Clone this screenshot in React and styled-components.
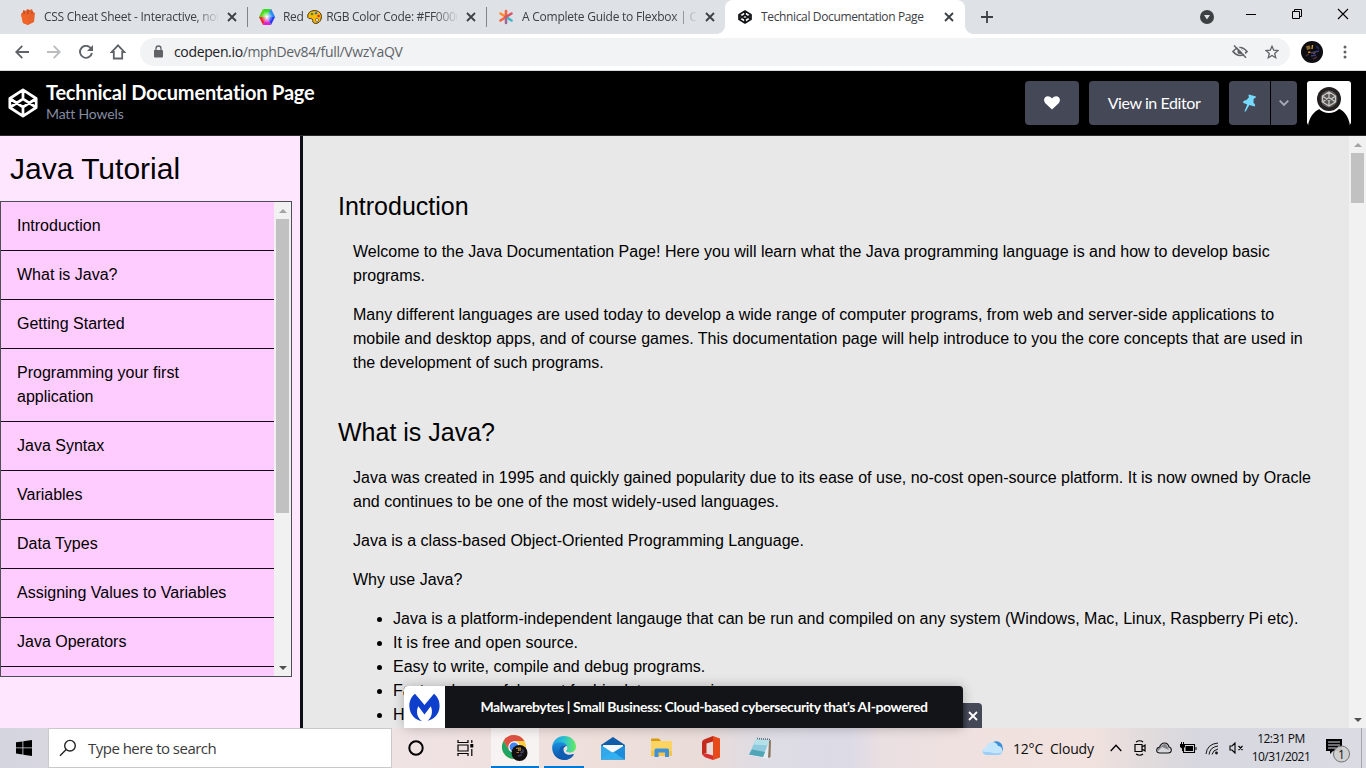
import React from 'react';
import styled, { createGlobalStyle, css } from 'styled-components';

const GlobalStyle = createGlobalStyle`
  * { box-sizing: border-box; }
  html, body { margin: 0; padding: 0; overflow: hidden; }
  svg { display: block; flex: none; }
`;

const uiFont = `"Open Sans", "Noto Sans", sans-serif`;
const penFont = `Lato, "Open Sans", sans-serif`;
const docFont = `"Liberation Sans", Arial, sans-serif`;

const Screen = styled.div`
  width: 1366px;
  height: 768px;
  display: flex;
  flex-direction: column;
  overflow: hidden;
  position: relative;
  background: #000;
`;

/* ---------- browser tabs ---------- */
const TabStrip = styled.div`
  height: 34px;
  flex: none;
  display: flex;
  padding-left: 8px;
  background: #dee1e6;
`;

const Tab = styled.div`
  width: 239px;
  height: 34px;
  display: flex;
  align-items: center;
  padding-left: 12px;
  position: relative;
  font: 12px/16px ${uiFont};
  color: #3c4043;
  ${p => p.$divider && css`
    &::before {
      content: '';
      position: absolute;
      left: 0;
      top: 7px;
      width: 1px;
      height: 20px;
      background: #808387;
    }
  `}
  ${p => p.$active && css`
    width: 240px;
    background: #fff;
    border-radius: 8px 8px 0 0;
    &::before, &::after {
      content: '';
      position: absolute;
      bottom: 0;
      width: 8px;
      height: 8px;
    }
    &::before { left: -8px; background: radial-gradient(circle at 0 0, #dee1e6 7.5px, #fff 8px); }
    &::after { right: -8px; background: radial-gradient(circle at 100% 0, #dee1e6 7.5px, #fff 8px); }
  `}
`;

const TabTitle = styled.div`
  width: 174px;
  margin-left: 8px;
  display: flex;
  align-items: center;
  white-space: nowrap;
  overflow: hidden;
  letter-spacing: ${p => p.$track || '-0.24px'};
  ${p => p.$fade && css`mask-image: linear-gradient(90deg, #000 150px, transparent 176px);`}
`;

const Emoji = styled.span`
  margin: 0 1px;
`;

const TabClose = styled.div`
  width: 28px;
  display: flex;
  justify-content: center;
`;

const NewTab = styled.div`
  width: 44px;
  display: flex;
  align-items: center;
  justify-content: center;
`;

const WindowControls = styled.div`
  margin-left: auto;
  display: flex;
  align-items: flex-start;
`;

const ControlCell = styled.div`
  width: ${p => p.$w || 46}px;
  height: ${p => p.$h || 28}px;
  display: flex;
  align-items: center;
  justify-content: center;
`;

/* ---------- address bar ---------- */
const Toolbar = styled.div`
  height: 37px;
  flex: none;
  display: flex;
  align-items: center;
  background: #fff;
  border-bottom: 1px solid #d5d7da;
  padding-left: 6px;
`;

const ToolButton = styled.div`
  width: 32px;
  display: flex;
  justify-content: center;
`;

const Omnibox = styled.div`
  width: 1150px;
  height: 28px;
  margin-left: 6px;
  padding: 0 2px 0 12px;
  border-radius: 14px;
  background: #f1f3f4;
  display: flex;
  align-items: center;
`;

const Url = styled.div`
  margin-left: 10px;
  flex: 1;
  font: 14px/20px ${uiFont};
  letter-spacing: -0.35px;
  color: #5f6368;
`;

const Host = styled.span`
  color: #202124;
`;

/* ---------- pen header ---------- */
const PenHeader = styled.header`
  height: 65px;
  flex: none;
  display: flex;
  align-items: flex-start;
  padding: 10px 15px 0 8px;
  background: #000;
  border-bottom: 1px solid #2a2a2e;
  font-family: ${penFont};
`;

const PenLogo = styled.div`
  padding-top: 7px;
`;

const PenTitles = styled.div`
  margin-left: 8px;
  flex: 1;
`;

const PenTitle = styled.h1`
  margin: 0;
  font-size: 20px;
  line-height: 22px;
  font-weight: 700;
  letter-spacing: -0.2px;
  color: #fff;
`;

const PenAuthor = styled.div`
  padding-top: 2px;
  font-size: 14px;
  line-height: 18px;
  letter-spacing: -0.15px;
  color: #868ca0;
`;

const PenButton = styled.div`
  width: ${p => p.$w}px;
  height: 44px;
  margin-left: ${p => p.$gap ?? 10}px;
  border-radius: ${p => p.$radius || '4px'};
  display: flex;
  align-items: center;
  justify-content: center;
  background: #444857;
  color: #fff;
  font-size: 16px;
  letter-spacing: -0.42px;
  padding-bottom: ${p => p.$lift || 0}px;
`;

const PenAvatar = styled.div`
  width: 44px;
  height: 44px;
  margin-left: 10px;
  border-radius: 3px;
  overflow: hidden;
  background: #fff;
`;

/* ---------- document ---------- */
const Page = styled.div`
  height: 592px;
  flex: none;
  display: flex;
  font: 16px/24px ${docFont};
  color: #000;
`;

const Sidebar = styled.aside`
  width: 303px;
  background: #fee6ff;
  border-right: 3px solid #0c0f13;
`;

const SidebarTitle = styled.h1`
  margin: 0;
  height: 65px;
  padding-left: 10px;
  font-size: 30px;
  line-height: 65px;
  font-weight: 400;
`;

const Nav = styled.nav`
  width: 292px;
  height: 476px;
  border: 1px solid #4d4e53;
  display: flex;
  overflow: hidden;
`;

const NavList = styled.div`
  flex: 1;
  background: #ffccff;
`;

const NavItem = styled.div`
  padding: 12px 80px 12px 16px;
  border-bottom: 1px solid #170817;
  ${p => p.$wide && css`padding-right: 0;`}
`;

const ScrollTrack = styled.div`
  width: 17px;
  flex: none;
  display: flex;
  flex-direction: column;
  align-items: center;
  justify-content: space-between;
  background: #f1f1f1;
`;

const ScrollThumb = styled.div`
  width: 13px;
  height: ${p => p.$h}px;
  background: #c1c1c1;
  margin-bottom: auto;
`;

const ScrollArrow = styled.div`
  height: 17px;
  display: flex;
  align-items: center;
`;

const Main = styled.main`
  flex: 1;
  background: #e8e8e8;
  padding: 52px 30px 0 35px;
  overflow: hidden;
`;

const Section = styled.section`
  margin-bottom: 39px;
`;

const Heading = styled.h2`
  margin: 0;
  height: 52px;
  font-size: 25px;
  line-height: 36px;
  font-weight: 400;
`;

const Para = styled.p`
  margin: 0 0 15px 15px;
`;

const Bullets = styled.ul`
  margin: 0 0 0 15px;
  padding-left: 40px;
`;

/* ---------- sponsor strip, floating over the page ---------- */
const Sponsor = styled.div`
  position: absolute;
  left: 404px;
  top: 686px;
  height: 42px;
  display: flex;
  align-items: flex-end;
`;

const SponsorCard = styled.div`
  width: 559px;
  height: 42px;
  display: flex;
  overflow: hidden;
  border-radius: 4px 4px 0 0;
  background: #131417;
  box-shadow: 0 0 12px rgba(0, 0, 0, 0.25);
`;

const SponsorLogo = styled.div`
  width: 41px;
  display: flex;
  align-items: center;
  justify-content: center;
  background: #fff;
`;

const SponsorText = styled.div`
  flex: 1;
  text-align: center;
  font: 700 14px/42px ${penFont};
  letter-spacing: -0.41px;
  color: #fff;
  white-space: nowrap;
`;

const SponsorClose = styled.div`
  width: 19px;
  height: 25px;
  border-radius: 0 4px 0 0;
  background: linear-gradient(90deg, #2c2e39, #444857 5px);
  display: flex;
  align-items: center;
  justify-content: center;
`;

/* ---------- taskbar ---------- */
const Taskbar = styled.div`
  height: 40px;
  flex: none;
  display: flex;
  background: linear-gradient(90deg, #d5d5df 0, #d8d7e0 48px, #f0e3e4 391px, #eedfdb 600px, #e9dcd9 700px, #dedce4 765px, #dcdbe6 850px, #eadfe2 880px, #efe1df 960px, #f1e2df 1090px, #e3dcdc 1140px, #d6d7df 1200px, #dadbe3 1366px);
  font-family: ${uiFont};
  color: #0c0c0c;
`;

const StartButton = styled.div`
  width: 48px;
  display: flex;
  align-items: center;
  justify-content: center;
`;

const SearchBox = styled.div`
  width: 344px;
  border: 1px solid #c9c9c9;
  background: #fff;
  display: flex;
  align-items: center;
  padding-left: 10px;
  font-size: 15px;
  letter-spacing: -0.52px;
  color: #3a3a3a;
`;

const SearchLabel = styled.span`
  margin-left: 11px;
`;

const TaskIcon = styled.div`
  width: ${p => p.$w || 49}px;
  display: flex;
  align-items: center;
  justify-content: center;
  position: relative;
  ${p => p.$focused && css`background: #f8f3f3;`}
  ${p => p.$running && css`
    &::after {
      content: '';
      position: absolute;
      bottom: 0;
      left: ${p.$focused ? 0 : 5}px;
      right: ${p.$focused ? 0 : 4}px;
      height: 2px;
      background: #0078d7;
    }
  `}
`;

const Tray = styled.div`
  margin-left: auto;
  display: flex;
  align-items: center;
`;

const Weather = styled.div`
  display: flex;
  align-items: center;
  font-size: 14px;
  letter-spacing: -0.2px;
  width: 122px;
`;

const Temp = styled.span`
  margin-left: 9px;
  width: 37px;
`;

const TrayIcon = styled.div`
  width: 24px;
  display: flex;
  justify-content: center;
`;

const Clock = styled.div`
  width: 66px;
  text-align: center;
  font-size: 12px;
  line-height: 18px;
  letter-spacing: -0.5px;
`;

const Notice = styled.div`
  width: 40px;
  display: flex;
  justify-content: flex-end;
  padding: 4px 3px 0 0;
`;

const DesktopEdge = styled.div`
  width: 5px;
  height: 40px;
  margin-left: 7px;
  border-left: 1px solid #a6a6ac;
`;

/* ---------- drawings ---------- */
const Cross = ({ size = 8, color = '#3c4043', stroke = 1.8 }) => (
  <svg width={size} height={size} viewBox="0 0 8 8" overflow="visible">
    <path d="M0 0L8 8M8 0L0 8" stroke={color} strokeWidth={stroke * 8 / size} />
  </svg>
);

const CodePenMark = ({ size, color, width }) => (
  <svg width={size} height={size} viewBox="0 0 100 100" fill="none" stroke={color} strokeWidth={width} strokeLinejoin="round">
    <path d="M50 6L94 35V65L50 94L6 65V35ZM6 35L50 64L94 35M6 65L50 36L94 65M50 6V36M50 64V94" />
  </svg>
);

const CodePenFavicon = () => (
  <svg width="16" height="16" viewBox="0 0 16 16" fill="none" stroke="#131417" strokeWidth="1.700" strokeLinejoin="round">
    <path d="M8 2L14 5.800V10.200L8 14L2 10.200V5.800ZM8 6L11 8L8 10L5 8ZM8 2V6M8 10V14M2 5.800L5 8L2 10.200M14 5.800L11 8L14 10.200" />
  </svg>
);

const Arrow = ({ down, color }) => (
  <svg width="8" height="4" viewBox="0 0 8 4"><path d={down ? 'M0 0H8L4 4Z' : 'M0 4H8L4 0Z'} fill={color} /></svg>
);

const Basket = () => (
  <svg width="16" height="16" viewBox="0 0 16 16">
    <path d="M1 5L3 3L3 1L6 2L7 0L10 1L12 0L13 3L15 4L14 13L8 16L3 14Z" fill="#e8622c" />
    <path d="M1 5L8 6L8 16L3 14Z" fill="#f16529" />
    <path d="M4 2V5M8 1V5M12 2V5" stroke="#b7421a" />
  </svg>
);

const ColorHex = () => (
  <svg width="16" height="16" viewBox="0 0 16 16">
    <defs><radialGradient id="core"><stop offset="0" stopColor="#fff" /><stop offset="1" stopColor="#fff" stopOpacity="0" /></radialGradient></defs>
    <path d="M8 8L4 0H12Z" fill="#30e020" />
    <path d="M8 8L12 0L16 8Z" fill="#9a50f0" />
    <path d="M8 8H16L12 16Z" fill="#2838f0" />
    <path d="M8 8L12 16H4Z" fill="#18c8e8" />
    <path d="M8 8L4 16L0 8Z" fill="#f02030" />
    <path d="M8 8H0L4 0Z" fill="#50d810" />
    <path d="M8 8L12 0L16 8Z" fill="#2090f0" />
    <path d="M8 8L12 16H4Z" fill="#e020d0" />
    <circle cx="8" cy="8" r="6" fill="url(#core)" />
  </svg>
);

const Palette = () => (
  <svg width="15" height="14" viewBox="0 0 15 14">
    <path d="M7.5 .6C3 .6 .7 3.5 .7 6.3c0 2 1.600 2.400 3 2.300 1.500 0 2 .8 2 2 0 1.700 1 2.800 3 2.800 3.300 0 5.700-3 5.700-6.800C14.400 3 11.500 .6 7.500 .6Z" fill="#fcb900" stroke="#3a2a10" />
    <circle cx="5" cy="4" r="1.300" fill="#3a8a28" /><circle cx="9" cy="3.200" r="1.200" fill="#2a70c8" />
    <circle cx="11.600" cy="6" r="1.200" fill="#d02828" /><circle cx="10" cy="10" r="1.500" fill="#fff" stroke="#3a2a10" strokeWidth=".6" />
  </svg>
);

const Asterisk = () => (
  <svg width="16" height="16" viewBox="0 0 16 16" strokeWidth="2.600" strokeLinecap="round">
    <path d="M8 8L2.500 4.500" stroke="#ff8a2b" /><path d="M8 8V2" stroke="#f2643c" />
    <path d="M8 8L13.500 4.500" stroke="#d8526a" /><path d="M8 8L2.500 11.500" stroke="#f4653f" />
    <path d="M8 8V14" stroke="#9d6a9c" /><path d="M8 8L13.500 11.500" stroke="#3fb6c4" />
    <circle cx="8" cy="8" r="1.500" fill="#e84a58" />
  </svg>
);

const Heart = () => (
  <svg width="16" height="14" viewBox="0 0 16 14">
    <path d="M8 13.500L1.300 7.200C-.4 5.400-.3 2.700 1.200 1.300 3-.4 6 0 8 2.500 10-.0 13-.4 14.800 1.300c1.500 1.400 1.600 4.100-.1 5.900Z" fill="#fff" />
  </svg>
);

const Pin = () => (
  <svg width="16" height="18" viewBox="0 0 16 18">
    <path d="M7 .5L14 2.600 13.200 4.300 11.700 4.500 11.400 8.500 13.200 10.800 12.700 12.500 7.400 11 3.500 17.700 2.500 17.300 5.200 10.400 1 8.700 1.500 7 4.700 5.800 7.200 3 6.300 2Z" fill="#76daff" />
  </svg>
);

const PenPortrait = () => (
  <svg width="44" height="44" viewBox="0 0 44 44">
    <path d="M1 44C3 34 9 28 16 27H29C36 28 41 34 43 44Z" fill="#000" />
    <circle cx="22" cy="18" r="14" fill="#fff" />
    <circle cx="22" cy="18" r="12" fill="#231f20" />
    <circle cx="22" cy="18" r="8.500" fill="#55524f" />
    <path d="M22 11L28.500 15V21L22 25L15.500 21V15ZM15.500 15L22 19.500L28.500 15M15.500 21L22 16.500L28.500 21M22 11V16.500M22 19.500V25" fill="none" stroke="#c8c8c8" strokeWidth="1.300" />
  </svg>
);

const MalwareMark = () => (
  <svg width="31" height="29" viewBox="0 0 31 29">
    <path d="M6 .8C1 5 0 10 .5 14.500 1 21.500 6 27 13 28.300 10 26 8 22.500 8 19.500 8 17 8.500 15 9.300 13.300L15.500 21.500 21.700 13.300C23 16 23.300 19 22.600 21.500 22 24 20.500 26 18.500 27.800 25.500 26 30 21 30.500 14.500 31 9.500 29.500 4.500 25 .8L15.500 12Z" fill="#0d3ecc" />
  </svg>
);

const ChromeMark = () => (
  <svg width="26" height="26" viewBox="0 0 26 26" overflow="visible">
    <circle cx="12" cy="12" r="12" fill="#ffcd40" />
    <path d="M1.600 6A12 12 0 0 1 22.400 6H12L7 15Z" fill="#dd5144" />
    <path d="M1.600 6A12 12 0 0 0 12 24L16.800 15.500 7.200 15.500Z" fill="#1fa463" />
    <circle cx="12" cy="12" r="5.700" fill="#fff" /><circle cx="12" cy="12" r="4.500" fill="#4285f4" />
    <circle cx="17.500" cy="18" r="8" fill="#12100f" />
    <path d="M14 13.500L17 13L16.500 16M18.500 12.500L18 16" stroke="#b88a30" strokeWidth="1.200" fill="none" />
    <path d="M14.500 17.500L17 17.500M19 18L21 17" stroke="#b87020" strokeWidth="1.200" />
    <path d="M20 14L22 16M16 21L20 20M18 17.500L22 16.500" stroke="#34386a" strokeWidth="1.300" />
  </svg>
);

const EdgeMark = () => (
  <svg width="24" height="24" viewBox="0 0 24 24">
    <defs>
      <linearGradient id="edgeTop"><stop offset="0" stopColor="#1b9de2" /><stop offset=".5" stopColor="#2bc3d2" /><stop offset="1" stopColor="#66eb5c" /></linearGradient>
      <linearGradient id="edgeLow" x1="0" y1="0" x2="0" y2="1"><stop offset="0" stopColor="#1b8fe0" /><stop offset="1" stopColor="#0c50a4" /></linearGradient>
    </defs>
    <path d="M.2 10.500C1 4.500 6 0 12 0 19 0 24 5 24 10.500c0 4-3 6-6.300 6-2.500 0-4-.8-3.500-1.700C17 12 14.500 7.500 9.500 7.500 5 7.500 1.300 9.500.2 10.500Z" fill="url(#edgeTop)" />
    <path d="M.2 10.500C2 7.500 5.500 6 9 6.300c3 .2 5 1.700 6 3.400C12 8 8.500 10.500 8.500 14.500 8.500 19 13 21.500 17 20.800c2-.3 3.500-1 4.800-2.200C20 22 16 24 12 24 5 24-.5 18 .2 10.500Z" fill="url(#edgeLow)" />
    <path d="M15 9.700C11 8 7 11 7.200 15.500 7.300 20 10 23 13.500 24 17 23.700 20 21.800 21.800 18.600c.3-.6-.2-.9-.7-.6-4 2-9.600.3-9.600-4.500 0-1.800 1.200-3 3.500-3.800Z" fill="#0f5eb4" />
  </svg>
);

const MailMark = () => (
  <svg width="24" height="23" viewBox="0 0 24 23">
    <path d="M0 8L12 0L24 8V22.500H0Z" fill="#0f5ca8" />
    <path d="M2 8H22V18H2Z" fill="#f5f7fa" />
    <path d="M0 8L12 16 0 22.500Z" fill="#32a8ea" /><path d="M24 8L12 15.500 24 22.500Z" fill="#1d8ddb" />
    <path d="M0 22.500V21.500L12 15L24 22.500Z" fill="#2fb0f0" />
  </svg>
);

const FolderMark = () => (
  <svg width="22" height="20" viewBox="0 0 22 20">
    <path d="M0 1.500Q0 .5 1 .5H8L10 3H0Z" fill="#d99a0e" />
    <path d="M0 3H21V18H0Z" fill="#fcd462" /><path d="M0 13H21V18H0Z" fill="#f7c648" />
    <path d="M3.500 19V12Q3.500 10.500 5 10.500H16.500Q18 10.500 18 12V19H14V14.500H7.500V19Z" fill="#3f92d8" />
  </svg>
);

const OfficeMark = () => (
  <svg width="20" height="24" viewBox="0 0 20 24">
    <path d="M12 0L19 2.500V21.500L12 24Z" fill="#e64a19" />
    <path d="M12 0L3 3.500Q1 4.300 1 6.500V18.500L5.500 17V7.500L12 5.500Z" fill="#c42b1c" />
    <path d="M1 18.500L5 17.500 12 19.500V24L4 21.200Z" fill="#d83030" />
  </svg>
);

const NotepadMark = () => (
  <svg width="24" height="23" viewBox="0 0 24 23">
    <path d="M19 4L23 3L22.500 20L19 21.500Z" fill="#8a7660" />
    <path d="M8 3L21 3.500L20 22L1 18Z" fill="#e6ecee" />
    <path d="M8 2L21.500 3L15 20L1 17.500Z" fill="#8fcbdc" />
    <path d="M8 2L21.500 3L19.500 8.500L5.500 7.500Z" fill="#b4e0ea" />
    <path d="M1 17.500L15 20L17 15L4 12.500Z" fill="#4fa4b6" />
    <path d="M9 1.500L22 2.500" stroke="#5c6266" strokeWidth="1.500" strokeDasharray="1 1" />
  </svg>
);

const WeatherCloud = () => (
  <svg width="22" height="16" viewBox="0 0 22 16">
    <path d="M9 5C10 2 13 .5 16 1.500c3 1 4.500 3 4.500 5.500 1.500 3-.5 6.500-4 6.500Z" fill="#3a8fd8" />
    <path d="M5 15C2 15 .5 13.200 .5 11 .5 9 2 7.500 4.500 7.300 5 4.500 7 2 10 2c3 0 5 1.500 6 4 2.700 0 4.500 2.300 4.500 4.800S18.500 15 15.500 15Z" fill="#c4e6fc" />
    <path d="M5 15C2 15 .5 13.200 .5 11 3 13 7 11 9 12.500 12 14 17 13 20 12.500 19 14.300 17.500 15 15.500 15Z" fill="#9bd0f6" />
  </svg>
);

const navItems = [
  'Introduction', 'What is Java?', 'Getting Started', 'Programming your first application', 'Java Syntax',
  'Variables', 'Data Types', 'Assigning Values to Variables', 'Java Operators',
];

const bulletItems = [
  'Java is a platform-independent langauge that can be run and compiled on any system (Windows, Mac, Linux, Raspberry Pi etc).',
  'It is free and open source.',
  'Easy to write, compile and debug programs.',
  'Fast and powerful, great for big data processing.',
  'H',
];

function BrowserTabs() {
  return (
    <TabStrip>
      <Tab><Basket /><TabTitle $fade $track="-0.27px">CSS Cheat Sheet - Interactive, not</TabTitle><TabClose><Cross /></TabClose></Tab>
      <Tab $divider><ColorHex /><TabTitle $fade $track="-0.3px">Red&nbsp;<Emoji><Palette /></Emoji>&nbsp;RGB Color Code: #FF0000</TabTitle><TabClose><Cross /></TabClose></Tab>
      <Tab $divider><Asterisk /><TabTitle $fade>A Complete Guide to Flexbox | CSS</TabTitle><TabClose><Cross /></TabClose></Tab>
      <Tab $active><CodePenFavicon /><TabTitle $track="-0.36px">Technical Documentation Page</TabTitle><TabClose><Cross /></TabClose></Tab>
      <NewTab><svg width="12" height="12" viewBox="0 0 12 12"><path d="M6 0V12M0 6H12" stroke="#3c4043" strokeWidth="1.800" /></svg></NewTab>
      <WindowControls>
        <ControlCell $w={42} $h={34}>
          <svg width="14" height="14" viewBox="0 0 14 14"><circle cx="7" cy="7" r="7" fill="#3c4043" /><path d="M4 5H10L7 9.500Z" fill="#dee1e6" /></svg>
        </ControlCell>
        <ControlCell><svg width="10" height="10" viewBox="0 0 10 10"><path d="M0 5.500H10" stroke="#000" /></svg></ControlCell>
        <ControlCell>
          <svg width="10" height="10" viewBox="0 0 10 10" fill="none" stroke="#000"><path d="M.5 2.500H7.500V9.500H.5ZM2.500 2.500V.5H9.500V7.500H7.500" /></svg>
        </ControlCell>
        <ControlCell><Cross size={10} color="#000" stroke={1.1} /></ControlCell>
      </WindowControls>
    </TabStrip>
  );
}

function AddressBar() {
  return (
    <Toolbar>
      <ToolButton><svg width="14" height="14" viewBox="0 0 14 14" fill="none" stroke="#5f6368" strokeWidth="1.800"><path d="M14 7H1.500M7.300 .8L1.200 7L7.300 13.200" /></svg></ToolButton>
      <ToolButton><svg width="14" height="14" viewBox="0 0 14 14" fill="none" stroke="#babcbe" strokeWidth="1.800"><path d="M0 7H12.500M6.700 .8L12.800 7L6.700 13.200" /></svg></ToolButton>
      <ToolButton>
        <svg width="14" height="14" viewBox="0 0 14 14"><path d="M11.800 3.200A6 6 0 1 0 12.900 8" fill="none" stroke="#5f6368" strokeWidth="1.900" /><path d="M14 0V6H8Z" fill="#5f6368" /></svg>
      </ToolButton>
      <ToolButton>
        <svg width="16" height="16" viewBox="0 0 16 16"><path d="M8 1.300L1.800 8H3.800V14.500H12.200V8H14.200Z" fill="none" stroke="#5f6368" strokeWidth="1.800" /></svg>
      </ToolButton>
      <Omnibox>
        <svg width="12" height="14" viewBox="0 0 12 14"><path d="M2 5H10Q11 5 11 6V11.500Q11 12.500 10 12.500H3Q2 12.500 2 11.500Z" fill="#5f6368" /><path d="M4 6V3.500a2.500 2.500 0 0 1 5 0V6" fill="none" stroke="#5f6368" strokeWidth="1.300" /></svg>
        <Url><Host>codepen.io</Host>/mphDev84/full/VwzYaQV</Url>
        <ToolButton>
          <svg width="16" height="14" viewBox="0 0 16 14"><path d="M1 6.500Q8-1.500 15 6.500Q8 14.500 1 6.500Z" fill="none" stroke="#5f6368" strokeWidth="1.700" /><circle cx="8" cy="6.500" r="2.600" fill="#5f6368" /><path d="M3.500 -.3L15 11.200" stroke="#f1f3f4" strokeWidth="1.500" /><path d="M2 .5L14 12.800" stroke="#5f6368" strokeWidth="1.500" /></svg>
        </ToolButton>
        <ToolButton>
          <svg width="14" height="14" viewBox="0 0 14 14"><path d="M7 1.300L8.700 5.200L13 5.600L9.700 8.400L10.700 12.700L7 10.400L3.300 12.700L4.300 8.400L1 5.600L5.300 5.200Z" fill="none" stroke="#5f6368" strokeWidth="1.300" /></svg>
        </ToolButton>
      </Omnibox>
      <ControlCell $w={44}>
        <svg width="22" height="22" viewBox="0 0 22 22">
          <circle cx="11" cy="11" r="11" fill="#0e0d12" />
          <path d="M5 5L9 4.500L9.500 8L6 9Z" fill="#8a6a2c" /><path d="M11.500 4L11 8" stroke="#c99a2e" strokeWidth="1.400" fill="none" /><path d="M7 11.500L9.500 11M12.500 12.500L14 11" stroke="#e08a20" strokeWidth="1.500" />
          <path d="M10 12L18 10M10 15L15 14" stroke="#3a3f78" strokeWidth="1.600" /><path d="M15 5L18 8" stroke="#23264e" strokeWidth="2" /><path d="M5 15L8 13M12 18L16 16" stroke="#4c2a34" strokeWidth="1.500" />
        </svg>
      </ControlCell>
      <ControlCell $w={22}><svg width="4" height="14" viewBox="0 0 4 14" fill="#5f6368"><circle cx="2" cy="2" r="1.500" /><circle cx="2" cy="7" r="1.500" /><circle cx="2" cy="12" r="1.500" /></svg></ControlCell>
    </Toolbar>
  );
}

function PenBar() {
  return (
    <PenHeader>
      <PenLogo><CodePenMark size={30} color="#fff" width={9} /></PenLogo>
      <PenTitles><PenTitle>Technical Documentation Page</PenTitle><PenAuthor>Matt Howels</PenAuthor></PenTitles>
      <PenButton $w={54}><Heart /></PenButton>
      <PenButton $w={130} $lift={1}>View in Editor</PenButton>
      <PenButton $w={41} $radius="4px 0 0 4px"><Pin /></PenButton>
      <PenButton $w={26} $gap={1} $radius="0 4px 4px 0">
        <svg width="10" height="6" viewBox="0 0 10 6"><path d="M.7 .7L5 5L9.300 .7" fill="none" stroke="#a9adbb" strokeWidth="1.800" /></svg>
      </PenButton>
      <PenAvatar><PenPortrait /></PenAvatar>
    </PenHeader>
  );
}

function Scrollbar({ thumb }) {
  return (
    <ScrollTrack>
      <ScrollArrow><Arrow color="#a3a3a3" /></ScrollArrow>
      <ScrollThumb $h={thumb} />
      <ScrollArrow><Arrow down color="#505050" /></ScrollArrow>
    </ScrollTrack>
  );
}

function Documentation() {
  return (
    <Page>
      <Sidebar>
        <SidebarTitle>Java Tutorial</SidebarTitle>
        <Nav>
          <NavList>{navItems.map(t => <NavItem key={t} $wide={t.startsWith('Assigning')}>{t}</NavItem>)}</NavList>
          <Scrollbar thumb={294} />
        </Nav>
      </Sidebar>
      <Main>
        <Section>
          <Heading>Introduction</Heading>
          <Para>Welcome to the Java Documentation Page! Here you will learn what the Java programming language is and how to develop basic programs.</Para>
          <Para>Many different languages are used today to develop a wide range of computer programs, from web and server-side applications to mobile and desktop apps, and of course games. This documentation page will help introduce to you the core concepts that are used in the development of such programs.</Para>
        </Section>
        <Section>
          <Heading>What is Java?</Heading>
          <Para>Java was created in 1995 and quickly gained popularity due to its ease of use, no-cost open-source platform. It is now owned by Oracle and continues to be one of the most widely-used languages.</Para>
          <Para>Java is a class-based Object-Oriented Programming Language.</Para>
          <Para>Why use Java?</Para>
          <Bullets>{bulletItems.map(t => <li key={t}>{t}</li>)}</Bullets>
        </Section>
      </Main>
      <Scrollbar thumb={50} />
    </Page>
  );
}

function WindowsBar() {
  return (
    <Taskbar>
      <StartButton>
        <svg width="16" height="16" viewBox="0 0 16 16"><path d="M0 2.300L6.500 1.400V7.500H0ZM7.300 1.300L16 0V7.500H7.300ZM0 8.300H6.500V14.500L0 13.600ZM7.300 8.300H16V16L7.300 14.700Z" /></svg>
      </StartButton>
      <SearchBox>
        <svg width="18" height="18" viewBox="0 0 18 18" fill="none" stroke="#222" strokeWidth="1.400"><circle cx="11" cy="6.700" r="5.300" /><path d="M7.200 10.500L1 16.700" /></svg>
        <SearchLabel>Type here to search</SearchLabel>
      </SearchBox>
      <TaskIcon $w={48}><svg width="16" height="16" viewBox="0 0 16 16"><circle cx="8" cy="8" r="6.700" fill="none" stroke="#000" strokeWidth="2" /></svg></TaskIcon>
      <TaskIcon $w={51}>
        <svg width="17" height="16" viewBox="0 0 17 16" fill="none" stroke="#000" strokeWidth="1.200"><path d="M1 0V2.500H11V0M1 16V13.500H11V16M1 5H11V11H1ZM14.800 0V3M14.800 9V16" /><path d="M13.300 4H16.300V7.500H13.300Z" fill="#000" stroke="none" /></svg>
      </TaskIcon>
      <TaskIcon $w={48} $running $focused><ChromeMark /></TaskIcon>
      <TaskIcon $running><EdgeMark /></TaskIcon>
      <TaskIcon><MailMark /></TaskIcon>
      <TaskIcon><FolderMark /></TaskIcon>
      <TaskIcon><OfficeMark /></TaskIcon>
      <TaskIcon><NotepadMark /></TaskIcon>
      <Tray>
        <Weather><WeatherCloud /><Temp>12°C</Temp><span>Cloudy</span></Weather>
        <TrayIcon><svg width="12" height="8" viewBox="0 0 12 8"><path d="M.7 7L6 1.300L11.300 7" fill="none" stroke="#000" strokeWidth="1.300" /></svg></TrayIcon>
        <TrayIcon><svg width="12" height="16" viewBox="0 0 12 16" fill="none" stroke="#000" strokeWidth="1.200"><path d="M2 2Q6-.5 9 2M2 14Q6 16.500 9 14M1 4.500H8V11.500H1ZM8 7L11 5V11L8 9" /></svg></TrayIcon>
        <TrayIcon><svg width="16" height="12" viewBox="0 0 16 12"><path d="M4 11Q.7 11 .7 8.200Q.7 5.500 3.500 5.200Q5 1 8.500 1Q12 1 13 5Q15.300 5.500 15.300 8Q15.300 11 12 11Z" fill="#d8d8dc" stroke="#111" strokeWidth="1.100" /><path d="M2 9L6 5L13 8L11 3.500Q8 0 4.500 5L1.500 7Z" fill="#84858a" /></svg></TrayIcon>
        <TrayIcon><svg width="17" height="12" viewBox="0 0 17 12"><path d="M5 2.500H14.500V10.500H3.500V6" fill="none" stroke="#000" strokeWidth="1.100" /><path d="M5.500 4H13V9H5.500ZM15.500 5H16.500V8H15.500ZM0 2H5V5L3.500 6.500V9H2V6.500L0 5ZM1 0H2V2H1ZM3 0H4V2H3Z" /></svg></TrayIcon>
        <TrayIcon><svg width="14" height="13" viewBox="0 0 14 13" fill="none" stroke="#111" strokeWidth="1"><path d="M1 12Q2 2 13 1M4 12.500Q5 5 13 4M7 12.500Q8 8 13 7" /><circle cx="11.500" cy="11" r="1.400" fill="#111" stroke="none" /></svg></TrayIcon>
        <TrayIcon><svg width="15" height="12" viewBox="0 0 15 12" fill="none" stroke="#000" strokeWidth="1.100"><path d="M1 4H3L6 1V11L3 8H1ZM9.500 4L13.500 8M13.500 4L9.500 8" /></svg></TrayIcon>
        <Clock>12:31 PM<br />10/31/2021</Clock>
        <Notice>
          <svg width="26" height="26" viewBox="0 0 26 26"><path d="M1 2H17V14H8L5 17V14H1Z" fill="#000" /><path d="M3 5H15M3 8H15M3 11H11" stroke="#dcdde4" strokeWidth="1" /><circle cx="16.500" cy="17" r="8" fill="#cfcfcf" fillOpacity=".92" stroke="#707070" /><text x="16.500" y="21.500" textAnchor="middle" fontSize="12" fontFamily="Open Sans, sans-serif" fill="#111">1</text></svg>
        </Notice>
        <DesktopEdge />
      </Tray>
    </Taskbar>
  );
}

export default function App() {
  return (
    <Screen>
      <GlobalStyle />
      <BrowserTabs />
      <AddressBar />
      <PenBar />
      <Documentation />
      <WindowsBar />
      <Sponsor>
        <SponsorCard>
          <SponsorLogo><MalwareMark /></SponsorLogo>
          <SponsorText>Malwarebytes | Small Business: Cloud-based cybersecurity that's AI-powered</SponsorText>
        </SponsorCard>
        <SponsorClose><Cross size={8} color="#fff" stroke={1.8} /></SponsorClose>
      </Sponsor>
    </Screen>
  );
}
